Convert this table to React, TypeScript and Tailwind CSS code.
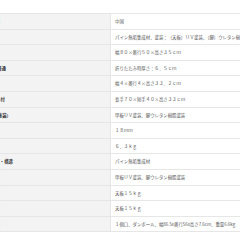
const rows = [
  { label: '原産国', end: 'w-0', value: '中国' },
  { label: '素材', end: 'w-0', value: 'パイン無垢集成材、塗装：（天板）ＵＶ塗装、（脚）ウレタン樹脂塗装' },
  { label: 'サイズ', end: 'w-0', value: '幅８０×奥行５０×高さ３５ｃｍ' },
  { label: '折りたたみ時・普通', end: 'w-[6px]', value: '折りたたみ時厚さ：６．５ｃｍ' },
  { label: '脚サイズ', end: 'w-0', value: '幅４×奥行４×高さ３３．２ｃｍ' },
  { label: 'スツール付', end: 'w-[5px]', value: '長手７０×短手４０×高さ３３ｃｍ' },
  { label: '仕上げ（塗装）', end: 'w-[11px]', value: '甲板ＵＶ塗装、脚ウレタン樹脂塗装' },
  { label: '板厚', end: 'w-0', value: '１８ｍｍ' },
  { label: '重量', end: 'w-0', value: '６．３ｋｇ' },
  { label: '材質・構造', end: 'w-[13px]', value: 'パイン無垢集成材' },
  { label: '仕上げ', end: 'w-0', value: '甲板ＵＶ塗装、脚ウレタン樹脂塗装' },
  { label: '耐荷重', end: 'w-0', value: '天板１５ｋｇ' },
  { label: '耐荷重', end: 'w-0', value: '天板１５ｋｇ' },
  { label: '梱包', end: 'w-0', value: '１個口、ダンボール、幅86.5x奥行56x高さ7.6cm、重量6.6kg' },
];

export default function App() {
  return (
    <div
      className="w-[240px] h-[240px] overflow-hidden bg-white pt-[13px]"
      style={{ fontFamily: '"Noto Sans CJK JP", "Noto Sans", sans-serif' }}
    >
      <div className="border-t border-[#e6e6e6]">
        {rows.map((r, i) => (
          <div key={i} className="flex h-[15.6px] border-b border-[#e6e6e6]">
            <div className="w-[111px] shrink-0 bg-[#f3f3f3] border-r border-[#e6e6e6] flex items-center">
              <div className={`${r.end} flex justify-end`}>
                <span className="whitespace-nowrap text-[4.4px] font-bold text-[#333]">{r.label}</span>
              </div>
            </div>
            <div className="flex-1 min-w-0 pl-[4px] flex items-center overflow-hidden">
              <span className="whitespace-nowrap text-[4.4px] text-[#555]">{r.value}</span>
            </div>
          </div>
        ))}
      </div>
    </div>
  );
}
